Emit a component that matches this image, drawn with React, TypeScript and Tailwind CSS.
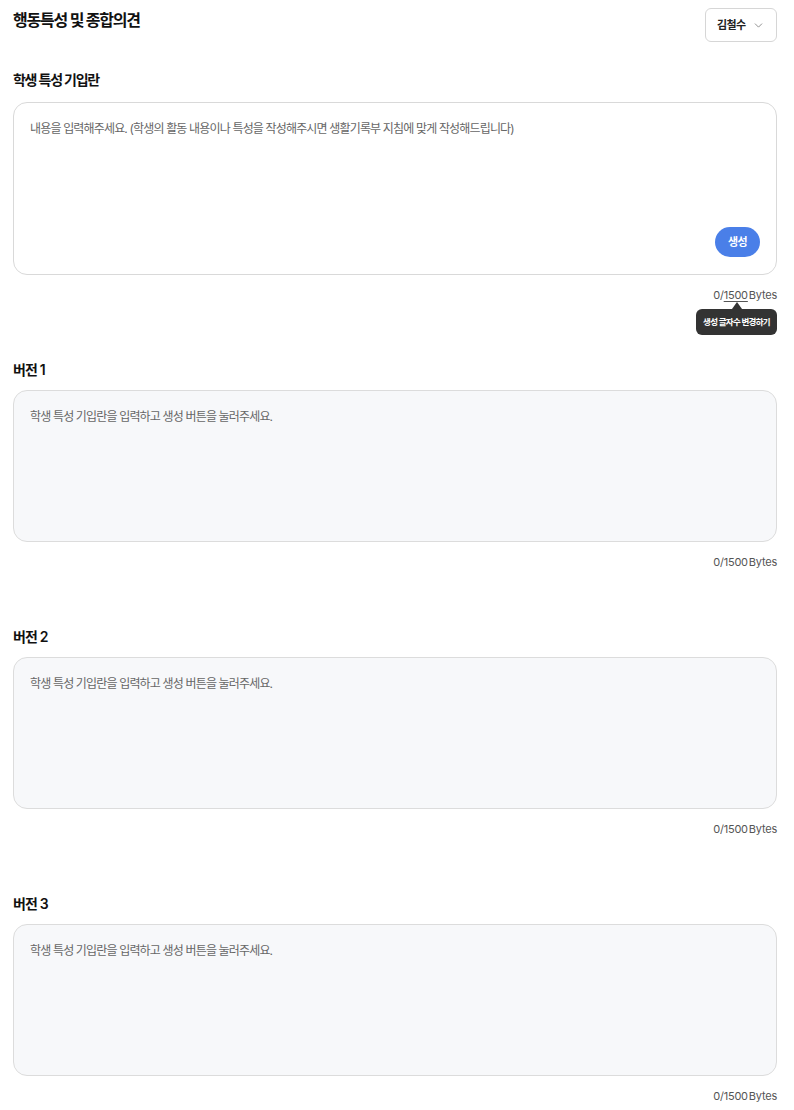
import { ChevronDown } from 'lucide-react';

const font = { fontFamily: 'Inter, "Noto Sans CJK KR", sans-serif' };

function Counter({ highlight }: { highlight?: boolean }) {
  return (
    <div className="relative mt-3 flex justify-end text-[11px] leading-4 tracking-[-0.02em] text-[#555]">
      <span>
        0/
        <span className={highlight ? 'underline underline-offset-2' : ''}>1500</span>
        <span className="ml-px">Bytes</span>
      </span>
      {highlight && (
        <div className="absolute right-0 top-[15px] flex flex-col items-end">
          <div className="mr-[35px] h-0 w-0 border-x-[5px] border-b-[7px] border-x-transparent border-b-[#333]" />
          <div className="flex h-[26px] w-[81px] items-center justify-center rounded-md bg-[#333] text-[8.5px] font-bold tracking-[-0.08em] text-white">
            생성 글자수 변경하기
          </div>
        </div>
      )}
    </div>
  );
}

function VersionBlock({ n }: { n: number }) {
  return (
    <section className="mt-[57px]">
      <h3 className="mb-[10px] text-sm font-semibold leading-5 tracking-[-0.06em] text-[#111]">버전 {n}</h3>
      <div className="h-[152px] rounded-[14px] border border-[#dcdcdc] bg-[#f7f8fa] px-4 pt-4">
        <p className="text-[12px] leading-5 tracking-[-0.07em] text-[#666]">학생 특성 기입란을 입력하고 생성 버튼을 눌러주세요.</p>
      </div>
      <Counter />
    </section>
  );
}

export default function App() {
  return (
    <div className="min-h-[1110px] bg-white pl-[13px] pr-[17px] pt-2" style={font}>
      <header className="flex items-start justify-between">
        <h1 className="pt-0.5 text-base font-bold leading-5 tracking-[-0.075em] text-[#111]">행동특성 및 종합의견</h1>
        <button className="flex h-[34px] w-[72px] items-center justify-between rounded-md border border-[#d6d6d6] bg-white pl-[11px] pr-[11px] text-[11px] font-semibold tracking-[-0.06em] text-[#222]">
          김철수
          <ChevronDown className="h-[13px] w-[13px] text-[#777]" strokeWidth={1.5} />
        </button>
      </header>

      <section className="mt-[28px]">
        <h2 className="mb-3 text-sm font-semibold leading-5 tracking-[-0.09em] text-[#111]">학생 특성 기입란</h2>
        <div className="flex h-[173px] flex-col justify-between rounded-[14px] border border-[#d9d9d9] bg-white px-4 pb-4 pt-4">
          <p className="text-[12px] leading-5 tracking-[-0.07em] text-[#666]">
            내용을 입력해주세요. (학생의 활동 내용이나 특성을 작성해주시면 생활기록부 지침에 맞게 작성해드립니다)
          </p>
          <div className="flex justify-end">
            <button className="mb-px h-[30px] w-[45px] rounded-full bg-[#4a7fe8] text-[11px] font-bold tracking-[-0.06em] text-white">생성</button>
          </div>
        </div>
        <Counter highlight />
      </section>

      <VersionBlock n={1} />
      <VersionBlock n={2} />
      <VersionBlock n={3} />
    </div>
  );
}
